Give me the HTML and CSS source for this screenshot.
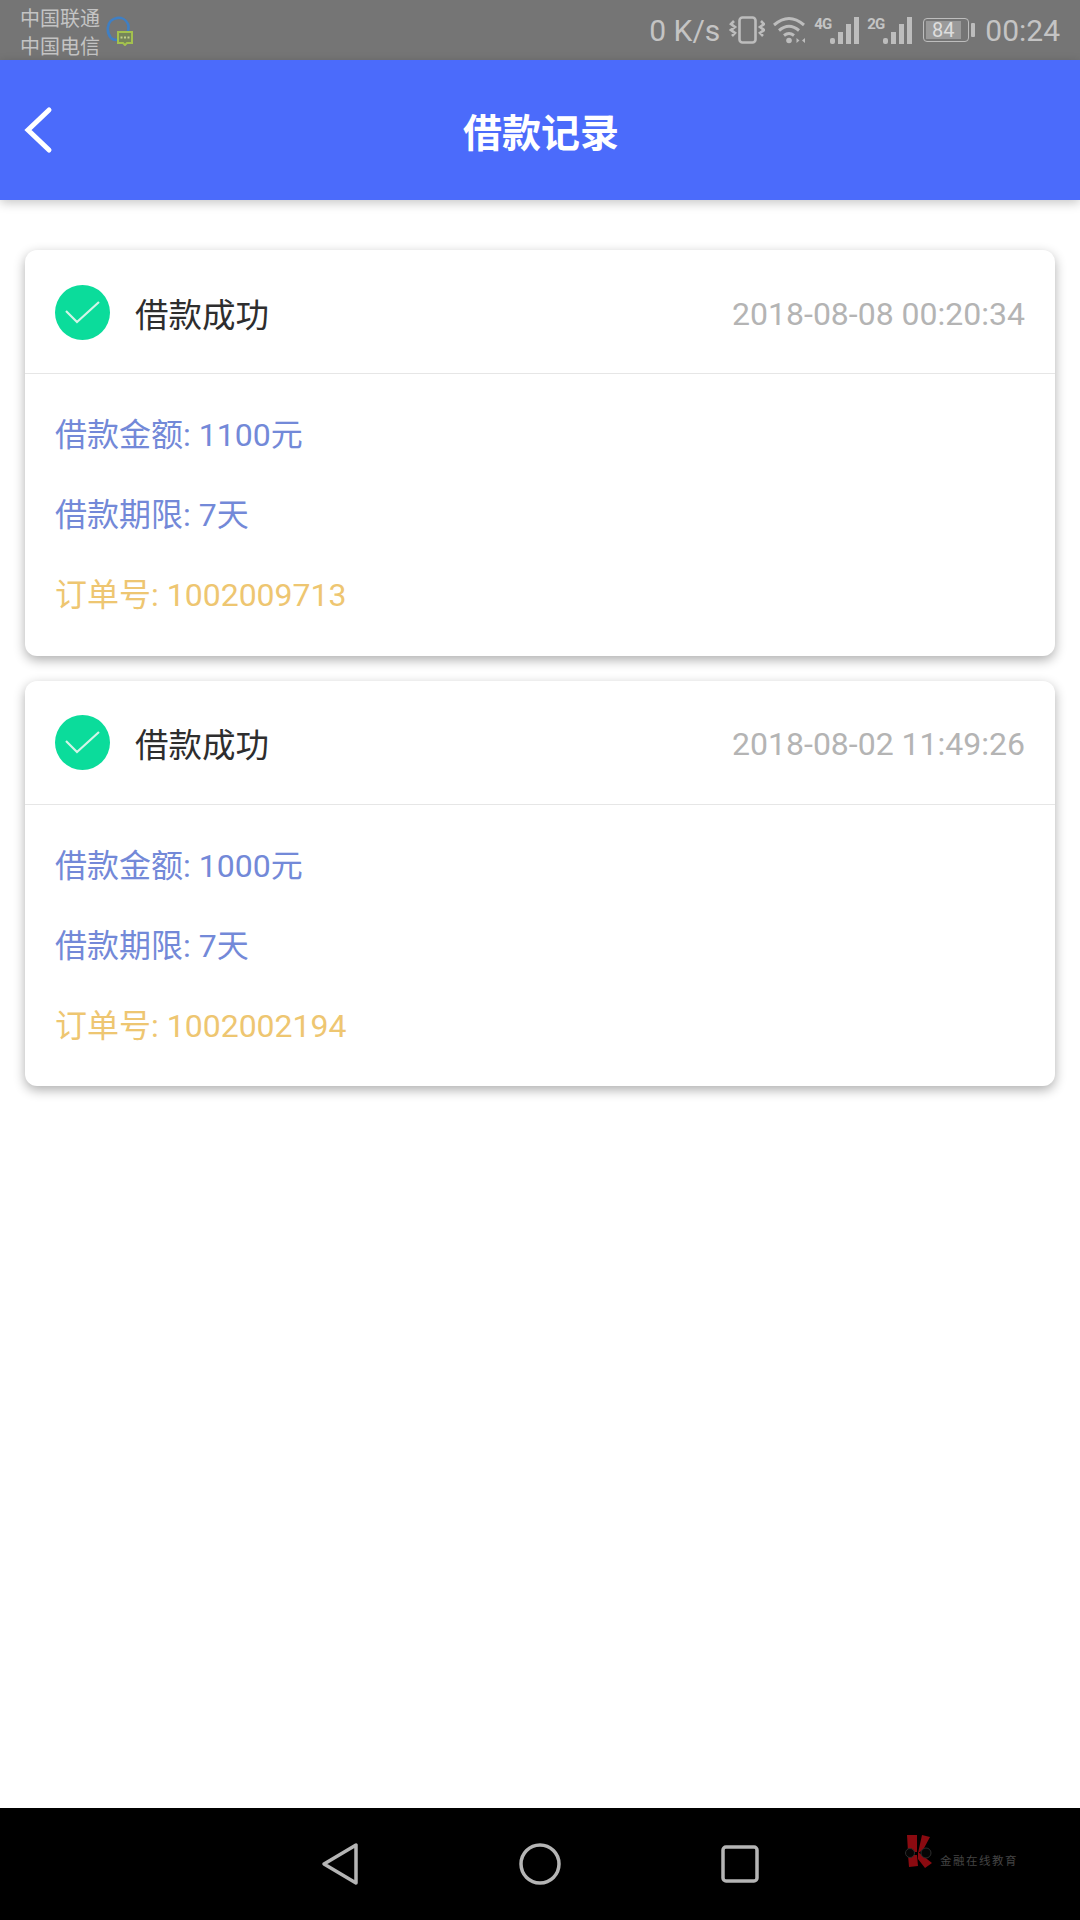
FILE: index.html
```html
<!DOCTYPE html>
<html lang="zh-CN">
<head>
    <meta charset="UTF-8">
    <meta name="viewport" content="width=device-width, initial-scale=1.0">
    <title>借款记录</title>
    <link rel="stylesheet" href="styles.css">
</head>
<body>
    <div class="phone">
        <div class="status-bar">
            <div class="status-left">
                <div class="carriers">
                    <div>中国联通</div>
                    <div>中国电信</div>
                </div>
                <svg class="app-icon" width="28" height="32" viewBox="0 0 28 32">
                    <path d="M5 24Q1 19 2 13A10.500 10.500 0 0 1 22 10q1 3 0 7" fill="none" stroke="#3f7fc4" stroke-width="2.600"/>
                    <path d="M5 24q2 2 6 2" fill="none" stroke="#3f7fc4" stroke-width="2.600"/>
                    <path d="M12 18h14v11h-5l-2 2-2-2h-5z" fill="#75855a" stroke="#a3c14e" stroke-width="2"/>
                    <path d="M14.500 23.500h9" stroke="#c3d08c" stroke-width="2" stroke-dasharray="2 1.500"/>
                </svg>
            </div>
            <div class="status-right">
                <span class="speed">0 K/s</span>
                <svg width="36" height="30" viewBox="0 0 36 30" fill="none" stroke="#bdbdbd" stroke-width="2.600">
                    <rect x="10.500" y="2.500" width="16" height="25" rx="3"/>
                    <path d="M5 6L2 9l4 3-4 3 4 3-3 3M32 6l3 3-4 3 4 3-4 3 3 3"/>
                </svg>
                <svg class="wifi" width="36" height="30" viewBox="0 0 36 30" fill="none" stroke="#bdbdbd" stroke-width="3">
                    <path d="M2 10q15-13 30 0M7 15.500q10-8.500 20 0M12 20.500q5-4 10 0"/>
                    <circle cx="17" cy="25.500" r="2.800" fill="#bdbdbd" stroke="none"/>
                    <path d="M24.500 23v5l3-2.500zM33 23v5l-3-2.500z" fill="#bdbdbd" stroke="none"/>
                </svg>
                <div class="signal">
                    <span class="net">4G</span>
                    <svg width="29" height="27" viewBox="0 0 29 27" fill="#bdbdbd">
                        <rect x="0" y="21" width="5" height="6" rx="2"/>
                        <rect x="8" y="15" width="5" height="12"/>
                        <rect x="16" y="7" width="5" height="20"/>
                        <rect x="24" y="0" width="5" height="27"/>
                    </svg>
                </div>
                <div class="signal">
                    <span class="net">2G</span>
                    <svg width="29" height="27" viewBox="0 0 29 27" fill="#bdbdbd">
                        <rect x="0" y="21" width="5" height="6" rx="2"/>
                        <rect x="8" y="15" width="5" height="12"/>
                        <rect x="16" y="7" width="5" height="20"/>
                        <rect x="24" y="0" width="5" height="27"/>
                    </svg>
                </div>
                <div class="battery">
                    <div class="battery-body"><span class="battery-fill">84</span></div>
                    <div class="battery-cap"></div>
                </div>
                <span class="clock">00:24</span>
            </div>
        </div>

        <div class="header">
            <svg class="back" width="32" height="48" viewBox="0 0 32 48">
                <path d="M27 4L6 24l21 20" fill="none" stroke="#fff" stroke-width="5" stroke-linecap="round"/>
            </svg>
            <h1>借款记录</h1>
        </div>

        <div class="content">
            <div class="record-card">
                <div class="record-head">
                    <svg class="check" width="55" height="55" viewBox="0 0 55 55">
                        <circle cx="27.500" cy="27.500" r="27.500" fill="#0bdc9b"/>
                        <path d="M11 26l11 11 22-20" fill="none" stroke="#d3f5e8" stroke-width="2.200"/>
                    </svg>
                    <span class="record-state">借款成功</span>
                    <span class="record-time">2018-08-08 00:20:34</span>
                </div>
                <div class="record-body">
                    <div class="row-blue">借款金额: 1100元</div>
                    <div class="row-blue">借款期限: 7天</div>
                    <div class="row-yellow">订单号: 1002009713</div>
                </div>
            </div>

            <div class="record-card">
                <div class="record-head">
                    <svg class="check" width="55" height="55" viewBox="0 0 55 55">
                        <circle cx="27.500" cy="27.500" r="27.500" fill="#0bdc9b"/>
                        <path d="M11 26l11 11 22-20" fill="none" stroke="#d3f5e8" stroke-width="2.200"/>
                    </svg>
                    <span class="record-state">借款成功</span>
                    <span class="record-time">2018-08-02 11:49:26</span>
                </div>
                <div class="record-body">
                    <div class="row-blue">借款金额: 1000元</div>
                    <div class="row-blue">借款期限: 7天</div>
                    <div class="row-yellow">订单号: 1002002194</div>
                </div>
            </div>
        </div>

        <div class="nav-bar">
            <svg width="38" height="44" viewBox="0 0 38 44">
                <path d="M35 3v38L3 22z" fill="none" stroke="#b5b5b5" stroke-width="3.500" stroke-linejoin="round"/>
            </svg>
            <svg width="42" height="42" viewBox="0 0 42 42">
                <circle cx="21" cy="21" r="19" fill="none" stroke="#b5b5b5" stroke-width="3.500"/>
            </svg>
            <svg width="38" height="38" viewBox="0 0 38 38">
                <rect x="2" y="2" width="34" height="34" rx="3" fill="none" stroke="#b5b5b5" stroke-width="3.500"/>
            </svg>
            <div class="watermark">
                <svg width="28" height="33" viewBox="0 0 28 33">
                    <path d="M2 0h10v17H3zM17 0l8 2-7 13-5 3zM3 20h9l1 11-9 1zM13 17l14 11-7 5-7-9z" fill="#8a0a10"/>
                    <circle cx="5" cy="18" r="4.500" fill="#050505" stroke="#2c2c2c"/>
                    <circle cx="21" cy="18" r="5" fill="#050505" stroke="#2c2c2c"/>
                </svg>
                <span>金融在线教育</span>
            </div>
        </div>
    </div>
</body>
</html>
```

FILE: styles.css
```css
* {
    box-sizing: border-box;
}

body {
    margin: 0;
    padding: 0;
    font-family: Roboto, "Noto Sans CJK SC", sans-serif;
    background: #fff;
}

.phone {
    width: 1080px;
    height: 1920px;
    display: flex;
    flex-direction: column;
    overflow: hidden;
}

.status-bar {
    height: 60px;
    padding: 0 20px;
    background: #757575;
    color: #c4c4c4;
    display: flex;
    align-items: center;
    justify-content: space-between;
}

.status-left {
    display: flex;
    align-items: center;
    gap: 6px;
}

.carriers {
    margin-top: 5px;
    font-size: 20px;
    line-height: 28px;
}

.status-right {
    display: flex;
    align-items: center;
}

.speed {
    font-size: 30px;
    margin-right: 9px;
}

.wifi {
    margin-left: 7px;
}

.signal {
    display: flex;
    align-items: flex-end;
    margin-left: 6px;
}

.signal + .signal {
    margin-left: 8px;
}

.net {
    width: 16px;
    font-size: 15px;
    font-weight: 700;
    letter-spacing: -1px;
    align-self: flex-start;
    line-height: 14px;
}

.battery {
    display: flex;
    align-items: center;
    margin-left: 11px;
    margin-right: 10px;
}

.battery-body {
    width: 46px;
    height: 24px;
    border: 1.500px solid #bdbdbd;
    border-radius: 4px;
    padding: 1.500px;
}

.battery-fill {
    display: block;
    width: 35px;
    height: 18px;
    background: #9a9a9a;
    color: #dedede;
    font-size: 20px;
    line-height: 18px;
    text-align: center;
}

.battery-cap {
    width: 4px;
    height: 14px;
    margin-left: 2px;
    background: #bdbdbd;
    border-radius: 1px;
}

.clock {
    font-size: 30px;
}

.header {
    position: relative;
    height: 140px;
    padding-left: 2px;
    background: #4b6bfb;
    box-shadow: 0 3px 10px rgba(0,0,0,0.22);
    display: flex;
    align-items: center;
    justify-content: center;
}

.back {
    position: absolute;
    left: 22px;
    top: 46px;
}

.header h1 {
    margin: 0;
    font-size: 39px;
    font-weight: 700;
    color: #fff;
}

.content {
    flex: 1;
    padding: 50px 25px 0;
    display: flex;
    flex-direction: column;
    gap: 25px;
}

.record-card {
    height: 405.500px;
    background: #fff;
    border-radius: 12px;
    box-shadow: 0 4px 12px rgba(0,0,0,0.32);
}

.record-head {
    height: 124px;
    padding: 1px 30px 0;
    display: flex;
    align-items: center;
    border-bottom: 1px solid #e6e6e6;
}

.record-state {
    margin-left: 25px;
    font-size: 33.500px;
    color: #2e2e2e;
}

.record-time {
    margin-left: auto;
    margin-top: 3px;
    font-size: 32px;
    color: #b4b4b4;
}

.record-body {
    padding: 21px 30px 0;
    font-size: 32px;
    line-height: 80.200px;
}

.row-blue {
    color: #7389d8;
}

.row-yellow {
    color: #eec671;
}

.nav-bar {
    position: relative;
    height: 112px;
    background: #000;
    display: flex;
    align-items: center;
    padding-left: 321px;
    gap: 160px;
}

.watermark {
    position: absolute;
    left: 905px;
    top: 27px;
    display: flex;
    align-items: flex-end;
    gap: 7px;
    color: #444;
    font-size: 11.500px;
    letter-spacing: 1.500px;
}
```
